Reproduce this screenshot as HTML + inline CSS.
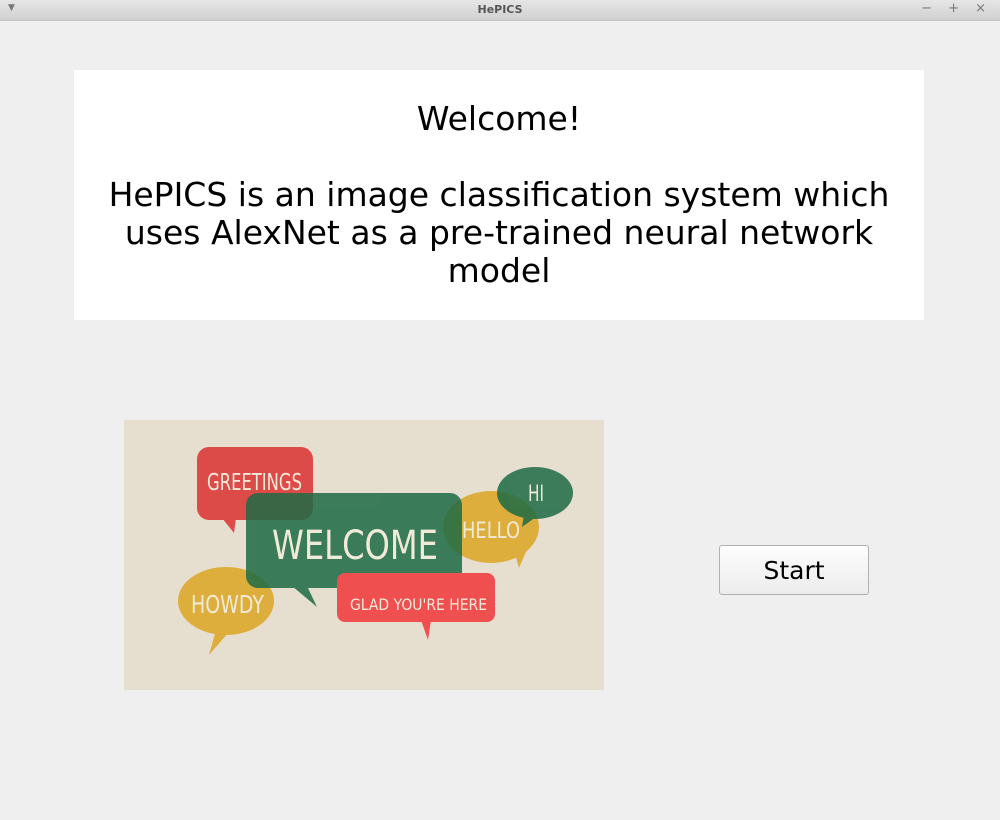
<!DOCTYPE html>
<html><head><style>
body{margin:0;width:1000px;height:820px;background:#efefef;position:relative;overflow:hidden;font-family:"DejaVu Sans","Liberation Sans",sans-serif;}
#tb{position:absolute;left:0;top:0;width:1000px;height:20px;background:linear-gradient(#e6e6e6,#d0d0d0);border-bottom:1px solid #c4c4c4;}
#tb .t{position:absolute;left:0;width:1000px;text-align:center;top:3px;font-size:11px;font-weight:bold;color:#555;}
#tb .l{position:absolute;left:8px;top:3px;font-size:9px;color:#777;}
#tb .r{position:absolute;right:8px;top:1px;font-size:13px;color:#777;letter-spacing:6px;}
#hd{position:absolute;left:74px;top:70px;width:850px;height:250px;background:#fff;text-align:center;font-size:33px;line-height:38px;color:#000;}
#btn{position:absolute;left:719px;top:545px;width:148px;height:48px;border:1px solid #b0b0b0;border-radius:3px;background:linear-gradient(#fdfdfd,#ececec);text-align:center;line-height:50px;font-size:25px;}
svg{position:absolute;left:124px;top:420px;}
svg text{font-family:"DejaVu Sans","Liberation Sans",sans-serif;fill:#f1ead8;}
</style></head><body>
<div id="tb"><span class="l">▼</span><span class="t">HePICS</span><span class="r">− + ×</span></div>
<div id="hd"><div style="margin-top:30px">Welcome!<br><br>HePICS is an image classification system which<br>uses AlexNet as a pre-trained neural network<br>model</div></div>
<svg width="480" height="270" viewBox="0 0 480 270">
<rect width="480" height="270" fill="#e6dfcf"/>
<g opacity="0.85" style="mix-blend-mode:multiply">
<rect x="73" y="27" width="116" height="73" rx="12" fill="#f2373a"/>
<polygon points="98,98 110,113 112,98" fill="#f2373a"/>
<ellipse cx="102" cy="181" rx="48" ry="34" fill="#f5bd2a"/>
<polygon points="92,210 85,235 105,212" fill="#f5bd2a"/>
<ellipse cx="367" cy="107" rx="48" ry="36" fill="#f5bd2a"/>
<polygon points="390,130 395,148 405,125" fill="#f5bd2a"/>
</g>
<g opacity="0.85">
<rect x="122" y="73" width="216" height="95" rx="12" fill="#1d6b45"/>
<polygon points="168,166 193,187 183,166" fill="#1d6b45"/>
<ellipse cx="411" cy="73" rx="38" ry="26" fill="#1d6b45"/>
<polygon points="400,95 398,107 412,97" fill="#1d6b45"/>
<rect x="213" y="153" width="158" height="49" rx="8" fill="#f2373a"/>
<polygon points="297,200 304,220 307,200" fill="#f2373a"/>
</g>
<text x="83" y="70" font-size="23" textLength="95" lengthAdjust="spacingAndGlyphs">GREETINGS</text>
<text x="148" y="139" font-size="40" textLength="166" lengthAdjust="spacingAndGlyphs">WELCOME</text>
<text x="338" y="118" font-size="22" textLength="58" lengthAdjust="spacingAndGlyphs">HELLO</text>
<text x="404" y="81" font-size="22" textLength="16" lengthAdjust="spacingAndGlyphs">HI</text>
<text x="67" y="193" font-size="25" textLength="73" lengthAdjust="spacingAndGlyphs">HOWDY</text>
<text x="226" y="190" font-size="16" textLength="137" lengthAdjust="spacingAndGlyphs">GLAD YOU'RE HERE</text>
</svg>
<div id="btn">Start</div>
</body></html>
